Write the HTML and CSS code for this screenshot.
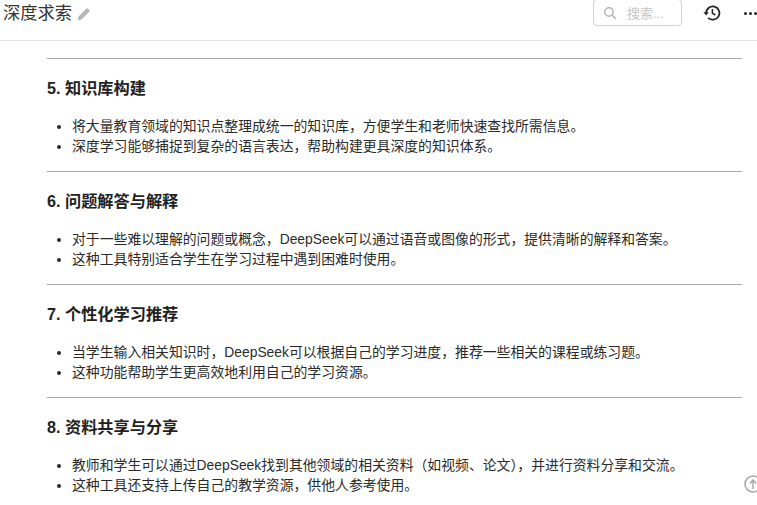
FILE: index.html
```html
<!DOCTYPE html>
<html lang="zh-CN">
<head>
<meta charset="utf-8">
<title>深度求索</title>
<link rel="stylesheet" href="styles.css">
</head>
<body>
<header class="topbar">
  <div class="title-wrap">
    <span class="title">深度求索</span>
    <svg class="pencil" width="14" height="14" viewBox="0 0 14 14"><path d="M.6 13.4l.9-4L9.4 1.500a1 1 0 0 1 1.400 0l1.700 1.700a1 1 0 0 1 0 1.400L4.600 12.500z" fill="#b8b8b8"/></svg>
  </div>
  <div class="tools">
    <div class="search">
      <svg width="14" height="14" viewBox="0 0 14 14"><circle cx="6" cy="6" r="4.2" fill="none" stroke="#b5b5b5" stroke-width="1.5"/><path d="M9 9l4 4" stroke="#b5b5b5" stroke-width="1.6"/></svg>
      <span class="search-text">搜索...</span>
    </div>
    <svg class="history" width="18" height="18" viewBox="0 0 18 18"><path d="M3.2 9a6.600 6.600 0 1 1 2 4.800" fill="none" stroke="#222" stroke-width="1.800"/><path d="M0.400 8.200h5.400L3.100 11.600z" fill="#222"/><path d="M9.400 5v4.300l3 1.700" fill="none" stroke="#222" stroke-width="1.500"/></svg>
    <div class="more"><i></i><i></i><i></i></div>
  </div>
</header>
<main class="doc">
  <hr>
  <h3>5. 知识库构建</h3>
  <ul>
    <li>将大量教育领域的知识点整理成统一的知识库，方便学生和老师快速查找所需信息。</li>
    <li>深度学习能够捕捉到复杂的语言表达，帮助构建更具深度的知识体系。</li>
  </ul>
  <hr>
  <h3>6. 问题解答与解释</h3>
  <ul>
    <li>对于一些难以理解的问题或概念，DeepSeek可以通过语音或图像的形式，提供清晰的解释和答案。</li>
    <li>这种工具特别适合学生在学习过程中遇到困难时使用。</li>
  </ul>
  <hr>
  <h3>7. 个性化学习推荐</h3>
  <ul>
    <li>当学生输入相关知识时，DeepSeek可以根据自己的学习进度，推荐一些相关的课程或练习题。</li>
    <li>这种功能帮助学生更高效地利用自己的学习资源。</li>
  </ul>
  <hr>
  <h3>8. 资料共享与分享</h3>
  <ul>
    <li>教师和学生可以通过DeepSeek找到其他领域的相关资料（如视频、论文），并进行资料分享和交流。</li>
    <li>这种工具还支持上传自己的教学资源，供他人参考使用。</li>
  </ul>
</main>
<svg class="to-top" width="20" height="20" viewBox="0 0 20 20"><circle cx="10" cy="10" r="8" fill="#fff" stroke="#aaa" stroke-width="1.600"/><path d="M10 15V7M7 9.500L10 6l3 3.500" fill="none" stroke="#aaa" stroke-width="1.500"/></svg>
</body>
</html>
```
FILE: styles.css
```css
* { box-sizing: border-box; }
html, body { height: 100%; }
body {
  margin: 0;
  height: 505px;
  overflow: hidden;
  position: relative;
  background: #fff;
  color: #222;
  font-family: "Liberation Sans", "Noto Sans CJK SC", sans-serif;
}
.topbar {
  height: 41px;
  border-bottom: 1px solid #e4e4e4;
  display: flex;
  justify-content: space-between;
  align-items: flex-start;
  padding-left: 3px;
}
.title-wrap { display: flex; align-items: center; gap: 5px; height: 26px; }
.title { font-size: 17.3px; color: #333; line-height: 26px; }
.pencil { margin-top: 1px; }
.tools { display: flex; align-items: center; width: 164px; flex: none; height: 26px; }
.search {
  width: 89px;
  height: 27px;
  margin-top: -1px;
  flex: none;
  border: 1px solid #d2d2d2;
  border-radius: 4px;
  display: flex;
  align-items: center;
  padding-left: 9px;
  gap: 10px;
}
.search-text { font-size: 13px; color: #c4c4c4; }
.history { margin-left: 21px; flex: none; }
.more { display: flex; gap: 2px; margin-left: 23px; flex: none; }
.more i { width: 3px; height: 3px; border-radius: 50%; background: #222; display: block; }
.doc { padding: 2px 15px 0 47px; }
hr {
  margin: 15px 0 0;
  border: 0;
  border-top: 1px solid #a8a8a8;
  height: 1px;
}
h3 {
  margin: 19px 0 17px;
  font-size: 16.2px;
  line-height: 21px;
  font-weight: 700;
  color: #222;
}
ul { margin: 0; padding: 0 0 0 25px; }
li { font-size: 13.85px; line-height: 20px; color: #2a2a2a; }
.to-top { position: absolute; left: 743px; top: 474px; }
```
